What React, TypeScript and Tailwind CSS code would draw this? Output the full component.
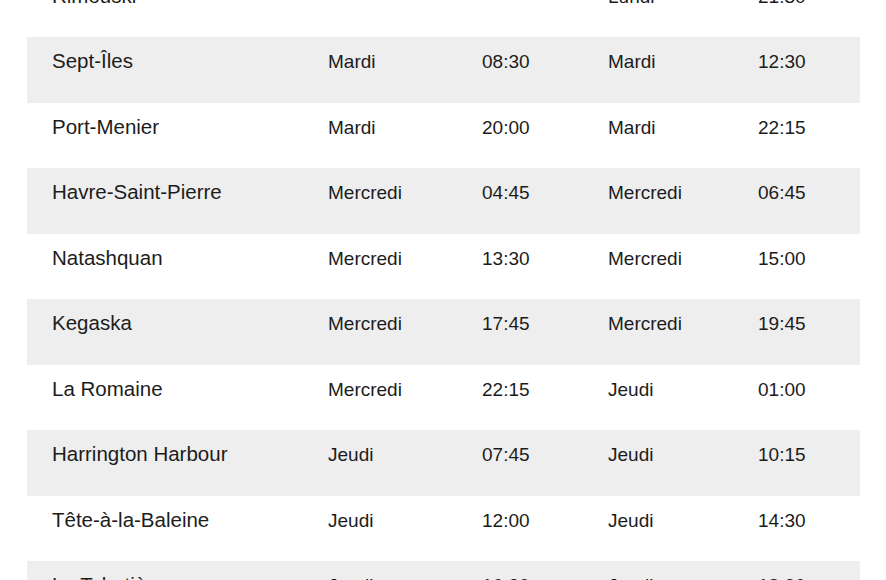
import React from "react";

type Stop = {
  port: string;
  arrDay: string;
  arrTime: string;
  depDay: string;
  depTime: string;
};

const stops: Stop[] = [
  { port: "Rimouski", arrDay: "", arrTime: "", depDay: "Lundi", depTime: "21:30" },
  { port: "Sept-Îles", arrDay: "Mardi", arrTime: "08:30", depDay: "Mardi", depTime: "12:30" },
  { port: "Port-Menier", arrDay: "Mardi", arrTime: "20:00", depDay: "Mardi", depTime: "22:15" },
  { port: "Havre-Saint-Pierre", arrDay: "Mercredi", arrTime: "04:45", depDay: "Mercredi", depTime: "06:45" },
  { port: "Natashquan", arrDay: "Mercredi", arrTime: "13:30", depDay: "Mercredi", depTime: "15:00" },
  { port: "Kegaska", arrDay: "Mercredi", arrTime: "17:45", depDay: "Mercredi", depTime: "19:45" },
  { port: "La Romaine", arrDay: "Mercredi", arrTime: "22:15", depDay: "Jeudi", depTime: "01:00" },
  { port: "Harrington Harbour", arrDay: "Jeudi", arrTime: "07:45", depDay: "Jeudi", depTime: "10:15" },
  { port: "Tête-à-la-Baleine", arrDay: "Jeudi", arrTime: "12:00", depDay: "Jeudi", depTime: "14:30" },
  { port: "La Tabatière", arrDay: "Jeudi", arrTime: "16:30", depDay: "Jeudi", depTime: "18:30" },
  { port: "Blanc-Sablon", arrDay: "Vendredi", arrTime: "06:00", depDay: "Vendredi", depTime: "08:00" },
];

export default function App() {
  return (
    <div className="h-[580px] w-[886px] overflow-hidden bg-white font-['Liberation_Sans',Arial,sans-serif] text-[#1c1c1c]">
      <div className="-mt-[28.5px] ml-[27px] w-[833px]">
        {stops.map((s, i) => (
          <div
            key={s.port}
            className={`grid h-[65.5px] grid-cols-[276px_154px_126px_150px_1fr] items-baseline pl-[25px] pt-[12px] leading-[24px] ${
              i % 2 === 1 ? "bg-[#eeeeee]" : "bg-white"
            }`}
          >
            <div className="text-[20.5px]">{s.port}</div>
            <div className="text-[19px]">{s.arrDay}</div>
            <div className="text-[19px]">{s.arrTime}</div>
            <div className="text-[19px]">{s.depDay}</div>
            <div className="text-[19px]">{s.depTime}</div>
          </div>
        ))}
      </div>
    </div>
  );
}
